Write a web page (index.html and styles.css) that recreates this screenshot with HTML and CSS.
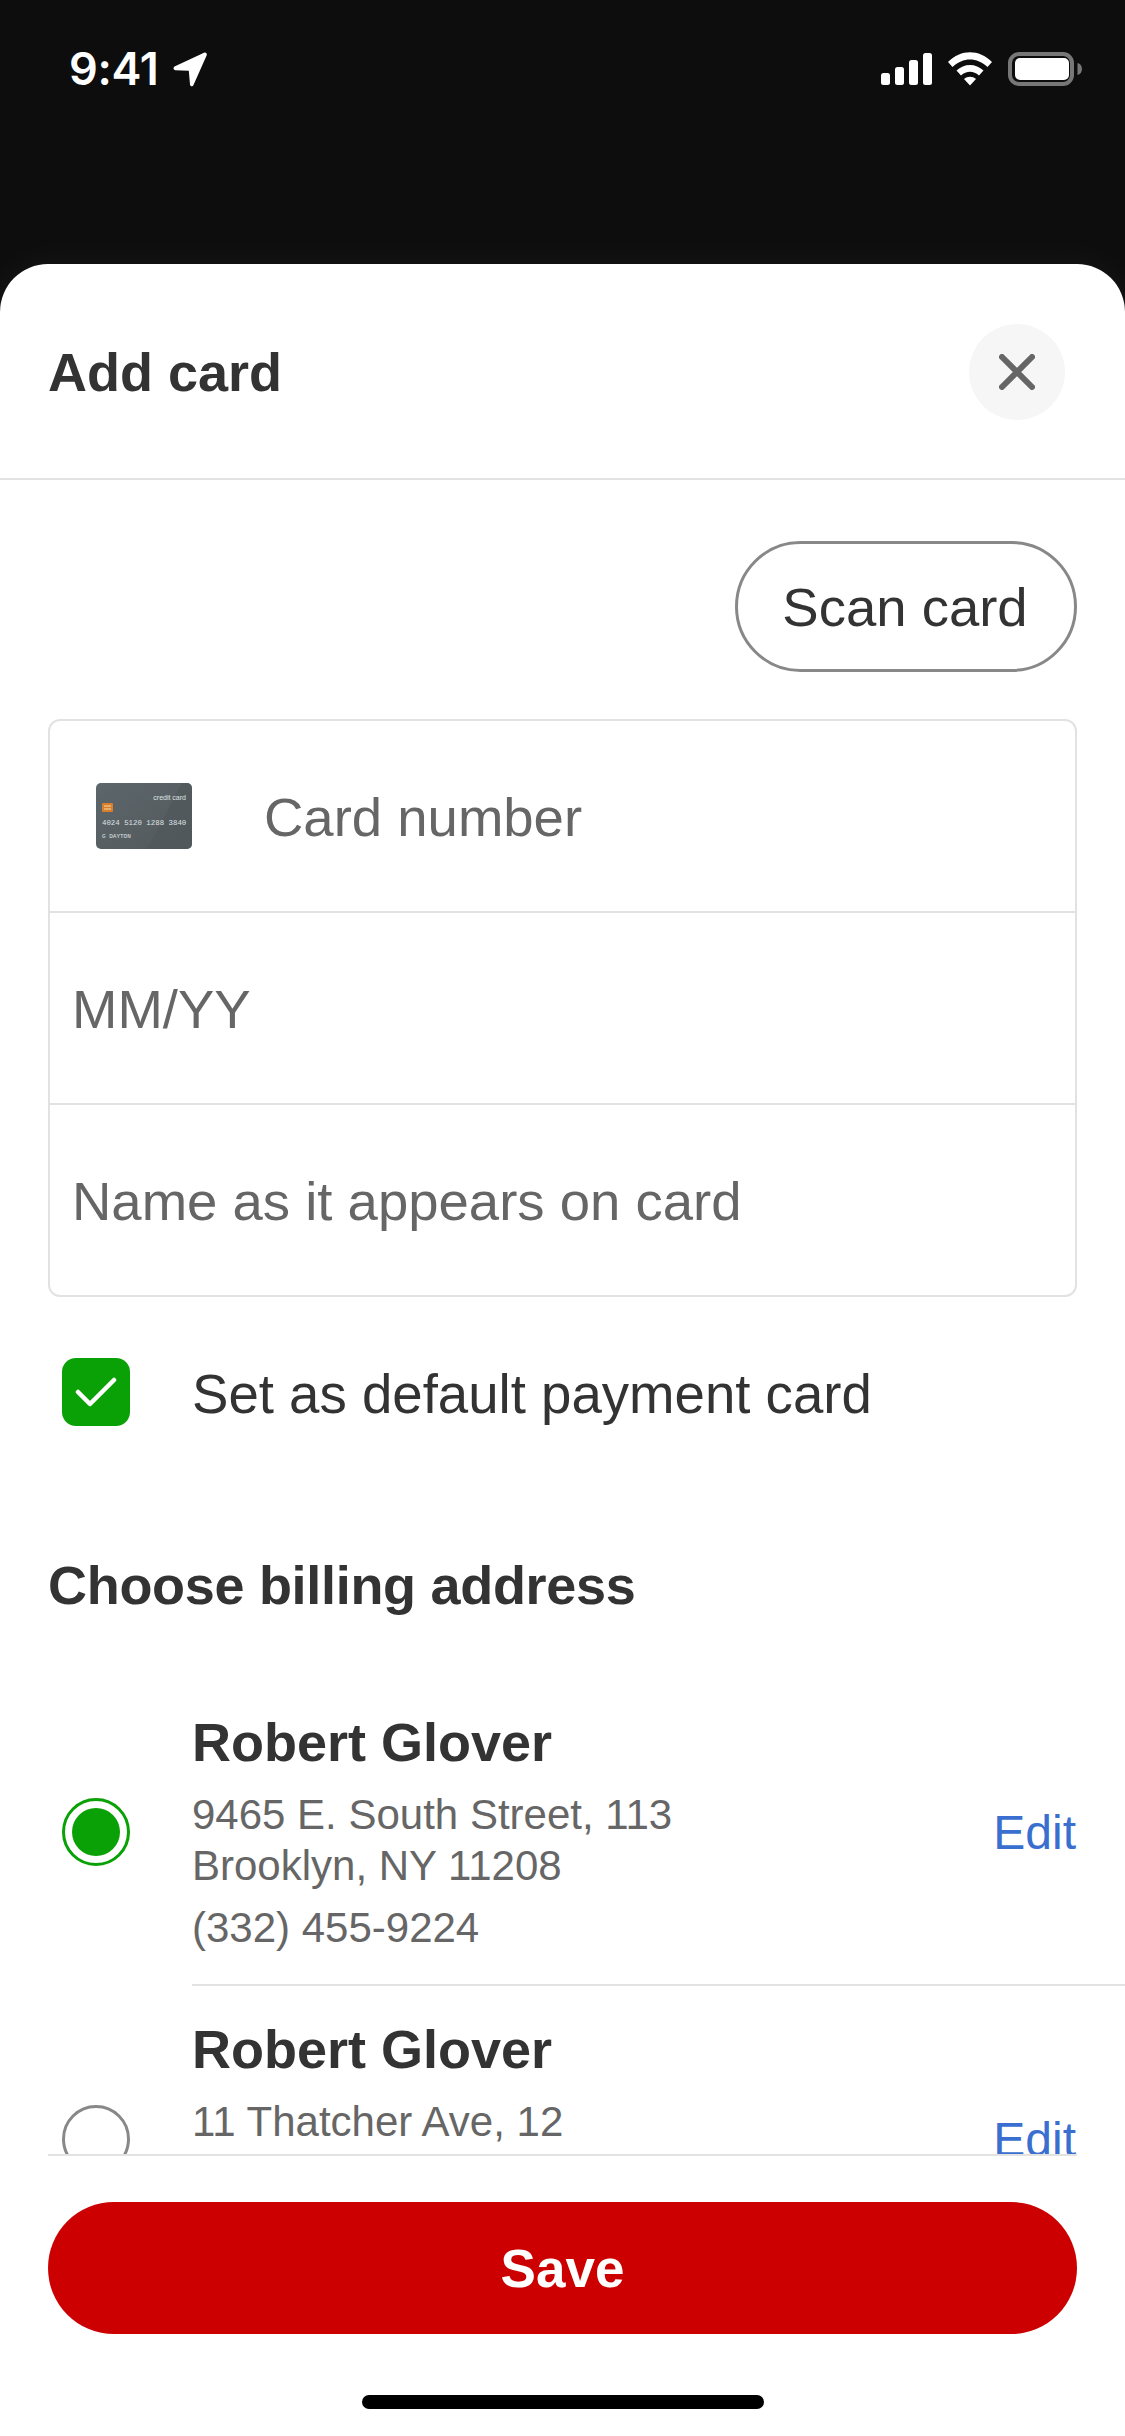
FILE: index.html
```html
<!DOCTYPE html>
<html lang="en">
<head>
<meta charset="utf-8">
<title>Add card</title>
<link rel="stylesheet" href="styles.css">
</head>
<body>
<div class="screen">
  <div class="statusbar">
    <div class="status-left">
      <span class="time">9:41</span>
      <svg class="loc" width="35" height="35" viewBox="0 0 35 35"><path d="M1.500 14.500 31 .8c1.800-.8 3.400.8 2.600 2.600L20.500 33c-.9 1.900-3.300 1.500-3.500-.6l-1.200-13.600-13.300-.6c-2.200-.1-2.600-2.800-1-3.700z" fill="#fff"/></svg>
    </div>
    <div class="status-right">
      <svg width="51" height="32" viewBox="0 0 51 32" fill="#fff"><rect x="0" y="20" width="9" height="12" rx="2.500"/><rect x="14" y="14" width="9" height="18" rx="2.500"/><rect x="28" y="7" width="9" height="25" rx="2.500"/><rect x="42" y="0" width="9" height="32" rx="2.500"/></svg>
      <svg class="wifi" width="46" height="34" viewBox="0 0 46 34" fill="#fff"><path d="M1 10C14-3 32-3 45 10L40.500 15C30 5 16 5 5.500 15Z"/><path d="M9.500 18.500C17 11 29 11 36.500 18.500L32 23.500C26.500 18.500 19.500 18.500 14 23.500Z"/><path d="M17 27C20.500 24 25.500 24 29 27L23 33.500Z"/></svg>
      <svg class="batt" width="74" height="34" viewBox="0 0 74 34"><rect x="2" y="2" width="62" height="30" rx="9" fill="none" stroke="#777" stroke-width="4"/><rect x="7" y="6" width="54" height="22" rx="5" fill="#fff"/><path d="M69.500 11c2.800.6 4.500 3 4.500 6s-1.700 5.400-4.500 6z" fill="#777"/></svg>
    </div>
  </div>

  <div class="sheet">
    <header class="sheet-head">
      <h1 class="title">Add card</h1>
      <button class="close" aria-label="Close">
        <svg width="36" height="36" viewBox="0 0 36 36" stroke="#666" stroke-width="6" stroke-linecap="round"><path d="M3 3 33 33M33 3 3 33"/></svg>
      </button>
    </header>

    <main class="scroll">
      <div class="scan-row"><button class="scan">Scan card</button></div>

      <div class="form">
        <div class="field field-card">
          <svg class="card-icon" width="96" height="66" viewBox="0 0 96 66">
            <defs><linearGradient id="cg" x1="0" y1="0" x2="1" y2="1"><stop offset="0" stop-color="#5c666b"/><stop offset="1" stop-color="#53595c"/></linearGradient></defs>
            <rect width="96" height="66" rx="5" fill="url(#cg)"/>
            <path d="M50 66C62 50 74 20 86 0h5a5 5 0 0 1 5 5v56a5 5 0 0 1-5 5z" fill="#4f575a" opacity=".6"/>
            <rect x="6" y="20" width="11" height="9" rx="1" fill="#d97f2a"/>
            <path d="M8 23h7M8 26h7" stroke="#f5dcae" stroke-width="1"/>
            <text class="ct ct-a" x="90" y="17" text-anchor="end">credit card</text>
            <text class="ct ct-b" x="6" y="42">4024 5120 1288 3840</text>
            <text class="ct ct-c" x="6" y="55">G DAYTON</text>
          </svg>
          <span class="ph">Card number</span>
        </div>
        <div class="field"><span class="ph">MM/YY</span></div>
        <div class="field field-last"><span class="ph">Name as it appears on card</span></div>
      </div>

      <div class="default-row">
        <span class="check">
          <svg width="42" height="32" viewBox="0 0 42 32" fill="none" stroke="#fff" stroke-width="4.500" stroke-linecap="round" stroke-linejoin="round"><path d="M3 16 15 28 39 4"/></svg>
        </span>
        <span class="default-label">Set as default payment card</span>
      </div>

      <h2 class="section">Choose billing address</h2>

      <section class="address">
        <span class="radio radio-on"></span>
        <div class="addr-body">
          <div class="addr-name">Robert Glover</div>
          <div class="addr-line">9465 E. South Street, 113</div>
          <div class="addr-line">Brooklyn, NY 11208</div>
          <div class="addr-line addr-phone">(332) 455-9224</div>
        </div>
        <a class="edit">Edit</a>
      </section>
      <section class="address">
        <span class="radio"></span>
        <div class="addr-body">
          <div class="addr-name">Robert Glover</div>
          <div class="addr-line">11 Thatcher Ave, 12</div>
        </div>
        <a class="edit">Edit</a>
      </section>
    </main>

    <footer class="foot">
      <button class="save">Save</button>
      <div class="home"></div>
    </footer>
  </div>
</div>
</body>
</html>
```
FILE: styles.css
```css
* { box-sizing: border-box; }
html, body { margin: 0; padding: 0; }
body {
  width: 1125px;
  height: 2436px;
  background: #0d0d0d;
  font-family: "Liberation Sans", Arial, sans-serif;
  overflow: hidden;
}
.screen { height: 2436px; display: flex; flex-direction: column; }
.statusbar {
  height: 264px;
  flex: none;
  display: flex;
  justify-content: space-between;
  align-items: flex-start;
  padding: 52px 43px 0 69px;
}
.status-left { display: flex; align-items: center; gap: 14px; height: 34px; }
.time {
  font-family: Inter, "Liberation Sans", sans-serif;
  font-weight: 600;
  font-size: 45px;
  line-height: 34px;
  color: #fff;
  letter-spacing: -0.3px;
}
.status-right { display: flex; align-items: center; gap: 15px; height: 34px; }
.sheet {
  flex: 1;
  min-height: 0;
  background: #fff;
  border-radius: 48px 48px 0 0;
  box-shadow: 0 0 40px rgba(255, 255, 255, .05);
  display: flex;
  flex-direction: column;
}
.sheet-head {
  flex: none;
  height: 216px;
  border-bottom: 2px solid #e2e2e2;
  display: flex;
  align-items: center;
  justify-content: space-between;
  padding: 2px 60px 0 48px;
}
.title {
  margin: 0;
  font-size: 54px;
  font-weight: 700;
  color: #333;
  line-height: 60px;
}
.close {
  width: 96px;
  height: 96px;
  border: 0;
  border-radius: 50%;
  background: #f6f6f6;
  padding: 0;
  display: flex;
  align-items: center;
  justify-content: center;
}
.scroll {
  flex: 1;
  min-height: 0;
  overflow: hidden;
  padding-top: 61px;
}
.scan-row { display: flex; justify-content: flex-end; padding: 0 48px; }
.scan {
  width: 342px;
  height: 131px;
  border: 3px solid #888;
  border-radius: 66px;
  background: #fff;
  font-family: inherit;
  font-size: 54.500px;
  color: #333;
  padding: 2px 2px 0 0;
}
.form {
  margin: 47px 48px 0;
  border: 2px solid #e2e2e2;
  border-radius: 12px;
}
.field {
  height: 192px;
  border-bottom: 2px solid #e2e2e2;
  display: flex;
  align-items: center;
  padding: 0 22px;
}
.field-last { border-bottom: 0; height: 190px; }
.field-card { padding-left: 46px; gap: 72px; }
.card-icon { flex: none; }
.ct { fill: #dfe3e4; font-family: "Liberation Sans", sans-serif; }
.ct-a { font-size: 7px; }
.ct-b { font-family: "Liberation Mono", monospace; font-size: 7.400px; }
.ct-c { font-family: "Liberation Mono", monospace; font-size: 6px; }
.ph { font-size: 54.500px; color: #666; padding-top: 2px; }
.default-row {
  margin: 60px 48px 0 62px;
  display: flex;
  align-items: center;
  gap: 62px;
  height: 69px;
}
.check {
  width: 68px;
  height: 68px;
  flex: none;
  border-radius: 14px;
  background: #09a105;
  display: flex;
  align-items: center;
  justify-content: center;
}
.default-label { font-size: 54.600px; color: #333; padding-top: 5px; }
.section {
  margin: 129px 48px 0;
  font-size: 54px;
  letter-spacing: -0.3px;
  line-height: 60px;
  font-weight: 700;
  color: #333;
}
.address {
  height: 309px;
  display: flex;
  align-items: center;
  padding-left: 62px;
  position: relative;
}
.section + .address { margin-top: 65px; height: 304px; }
.radio {
  width: 68px;
  height: 68px;
  flex: none;
  border-radius: 50%;
  border: 3px solid #888;
  background: #fff;
}
.radio-on {
  border-color: #09a105;
  padding: 7px;
  background: #09a105 content-box;
}
.addr-body {
  flex: 1;
  margin-left: 62px;
  height: 100%;
  padding-top: 33px;
}
.section + .address .addr-body { padding-top: 32px; }
.address + .address .addr-body { border-top: 2px solid #e2e2e2; }
.addr-name { font-size: 54px; font-weight: 700; color: #333; line-height: 60px; margin-bottom: 17px; }
.addr-line { font-size: 42px; color: #666; line-height: 51px; }
.addr-phone { margin-top: 11px; }
.edit {
  position: absolute;
  right: 49px;
  top: 50%;
  transform: translateY(-50%);
  font-size: 48px;
  color: #3a6fd0;
}
.foot {
  flex: none;
  height: 282px;
  margin: 0 48px;
  border-top: 2px solid #e2e2e2;
  padding-top: 46px;
  display: flex;
  flex-direction: column;
  align-items: center;
}
.save {
  width: 100%;
  height: 132px;
  flex: none;
  border: 0;
  border-radius: 66px;
  background: #cc0000;
  color: #fff;
  font-family: inherit;
  font-size: 53px;
  font-weight: 700;
  padding: 0;
}
.home {
  width: 402px;
  height: 14px;
  margin-top: 61px;
  border-radius: 7px;
  background: #000;
}
```
